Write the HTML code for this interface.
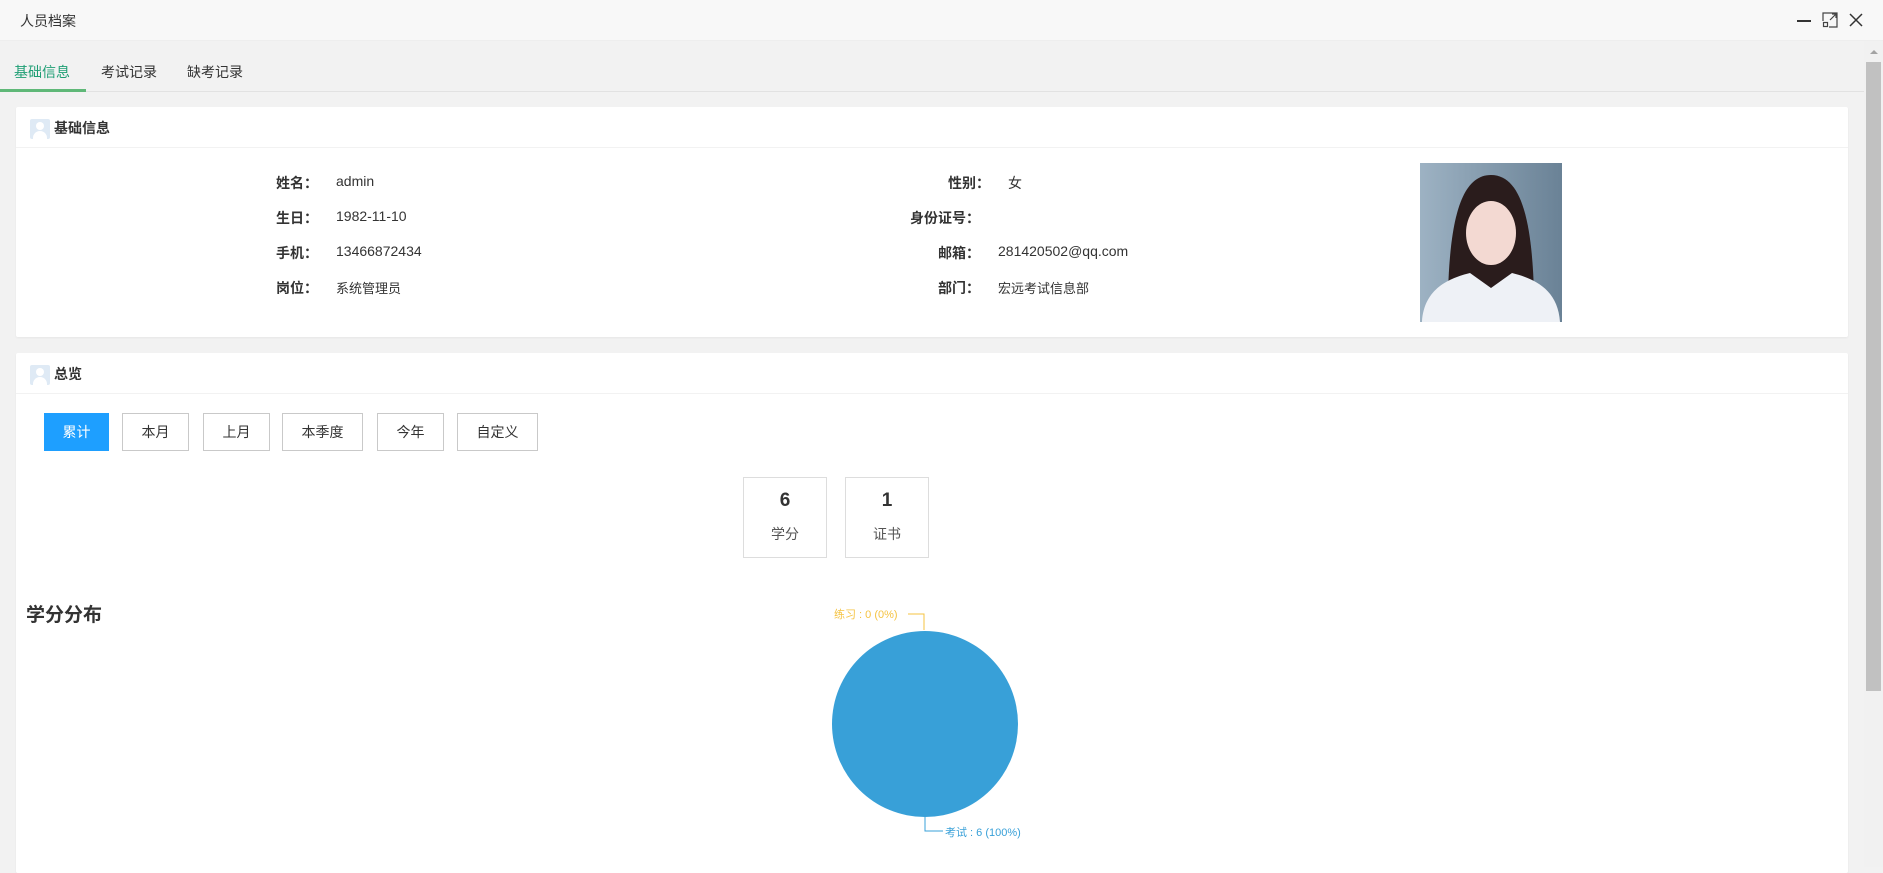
<!DOCTYPE html>
<html><head><meta charset="utf-8"><style>
*{margin:0;padding:0;box-sizing:border-box}
body{width:1883px;height:867px;overflow:hidden;background:#f2f2f2;font-family:"Liberation Sans","Noto Sans CJK SC",sans-serif;color:#333;position:relative;font-size:14px}
.abs{position:absolute;white-space:nowrap}
.title{top:0;left:0;width:1883px;height:41px;background:#f8f8f8;border-bottom:1px solid #eee}
.card{background:#fff;border-radius:2px;box-shadow:0 1px 2px rgba(0,0,0,.05)}
.hd{border-bottom:1px solid #f2f2f2}
.ic{width:20px;height:20px;background:#dfeaf5;border-radius:2px;overflow:hidden}
.ic:before{content:"";position:absolute;left:6px;top:3px;width:8px;height:8px;border-radius:50%;background:#fff}
.ic:after{content:"";position:absolute;left:3px;top:12px;width:14px;height:10px;border-radius:7px 7px 0 0;background:#fff}
.lb{font-weight:bold;text-align:right;font-size:14px}
.btn{height:38px;border:1px solid #c9c9c9;background:#fff;font-size:14px;text-align:center;line-height:36px;color:#333}
.box{border:1px solid #ddd;background:#fff;text-align:center}
</style></head><body>
<div class="abs title"></div>
<div class="abs" style="left:20px;top:11px;font-size:14px">人员档案</div>
<div class="abs" style="left:1797px;top:20px;width:14px;height:2px;background:#333"></div>
<svg class="abs" style="left:1822px;top:12px" width="16" height="16" viewBox="0 0 16 16" fill="none" stroke="#444" stroke-width="1.2"><path d="M1 9V1h14v14H7"/><rect x="1.5" y="10.5" width="4" height="4"/><path d="M8 8l6-6M10 2h4v4"/></svg>
<svg class="abs" style="left:1849px;top:13px" width="14" height="14" viewBox="0 0 14 14" stroke="#333" stroke-width="1.5"><path d="M1 1l12 12M13 1L1 13"/></svg>
<div class="abs" style="top:91px;left:0;width:1864px;height:1px;background:#e2e2e2"></div>
<div class="abs" style="left:14px;top:62px;color:#1e9e74">基础信息</div>
<div class="abs" style="left:0;top:89px;width:86px;height:3px;background:#5fb878"></div>
<div class="abs" style="left:101px;top:62px">考试记录</div>
<div class="abs" style="left:187px;top:62px">缺考记录</div>
<div class="abs" style="left:1864px;top:41px;width:19px;height:826px;background:#f1f1f1"></div>
<div class="abs" style="left:1866px;top:62px;width:15px;height:629px;background:#c1c1c1"></div>
<div class="abs" style="left:1870px;top:50px;border:4px solid transparent;border-bottom-color:#a3a3a3;border-top:0"></div>

<div class="abs card" style="left:16px;top:107px;width:1832px;height:230px"></div>
<div class="abs hd" style="left:16px;top:107px;width:1832px;height:41px"></div>
<div class="abs ic" style="left:30px;top:119px"></div>
<div class="abs" style="left:54px;top:118px;font-weight:bold;font-size:14px">基础信息</div>
<div class="abs lb" style="left:200px;width:118px;top:173px">姓名：</div>
<div class="abs" style="left:336px;top:173px">admin</div>
<div class="abs lb" style="left:200px;width:118px;top:208px">生日：</div>
<div class="abs" style="left:336px;top:208px">1982-11-10</div>
<div class="abs lb" style="left:200px;width:118px;top:243px">手机：</div>
<div class="abs" style="left:336px;top:243px">13466872434</div>
<div class="abs lb" style="left:200px;width:118px;top:278px">岗位：</div>
<div class="abs" style="left:336px;top:278px;font-size:13px">系统管理员</div>
<div class="abs lb" style="left:880px;width:110px;top:173px">性别：</div>
<div class="abs" style="left:1008px;top:173px">女</div>
<div class="abs lb" style="left:870px;width:110px;top:208px">身份证号：</div>
<div class="abs lb" style="left:870px;width:110px;top:243px">邮箱：</div>
<div class="abs" style="left:998px;top:243px">281420502@qq.com</div>
<div class="abs lb" style="left:870px;width:110px;top:278px">部门：</div>
<div class="abs" style="left:998px;top:278px;font-size:13px">宏远考试信息部</div>
<svg class="abs" style="left:1420px;top:163px" width="142" height="159" viewBox="0 0 142 159">
<defs><linearGradient id="g" x1="0" x2="1"><stop offset="0" stop-color="#9db2c3"/><stop offset="1" stop-color="#6a8296"/></linearGradient></defs>
<rect width="142" height="159" fill="url(#g)"/>
<path d="M28 130C30 60 40 12 71 12S112 60 114 130Z" fill="#2a1c1c"/>
<ellipse cx="71" cy="70" rx="25" ry="32" fill="#f3d9d2"/>
<path d="M2 159C4 125 30 115 50 110L71 125L92 110C112 115 138 125 140 159Z" fill="#eef1f6"/>
</svg>

<div class="abs card" style="left:16px;top:353px;width:1832px;height:520px"></div>
<div class="abs hd" style="left:16px;top:353px;width:1832px;height:41px"></div>
<div class="abs ic" style="left:30px;top:365px"></div>
<div class="abs" style="left:54px;top:364px;font-weight:bold;font-size:14px">总览</div>
<div class="abs btn" style="left:44px;top:413px;width:65px;background:#1e9fff;border-color:#1e9fff;color:#fff">累计</div>
<div class="abs btn" style="left:122px;top:413px;width:67px">本月</div>
<div class="abs btn" style="left:203px;top:413px;width:67px">上月</div>
<div class="abs btn" style="left:282px;top:413px;width:81px">本季度</div>
<div class="abs btn" style="left:377px;top:413px;width:67px">今年</div>
<div class="abs btn" style="left:457px;top:413px;width:81px">自定义</div>
<div class="abs box" style="left:743px;top:477px;width:84px;height:81px"><div style="font-weight:bold;font-size:19px;margin-top:12px">6</div><div style="font-size:14px;margin-top:12px;color:#555">学分</div></div>
<div class="abs box" style="left:845px;top:477px;width:84px;height:81px"><div style="font-weight:bold;font-size:19px;margin-top:12px">1</div><div style="font-size:14px;margin-top:12px;color:#555">证书</div></div>
<div class="abs" style="left:26px;top:600px;font-weight:bold;font-size:19px">学分分布</div>
<svg class="abs" style="left:820px;top:590px" width="240" height="277">
<circle cx="105" cy="134" r="93" fill="#38a0d8"/>
<path d="M88 24H104V40" fill="none" stroke="#f5c342"/>
<path d="M105 227V241H123" fill="none" stroke="#38a0d8"/>
<text x="14" y="28" font-size="11" fill="#f5c342" font-family="Liberation Sans,Noto Sans CJK SC,sans-serif">练习 : 0 (0%)</text>
<text x="125" y="246" font-size="11" fill="#38a0d8" font-family="Liberation Sans,Noto Sans CJK SC,sans-serif">考试 : 6 (100%)</text>
</svg>
</body></html>
